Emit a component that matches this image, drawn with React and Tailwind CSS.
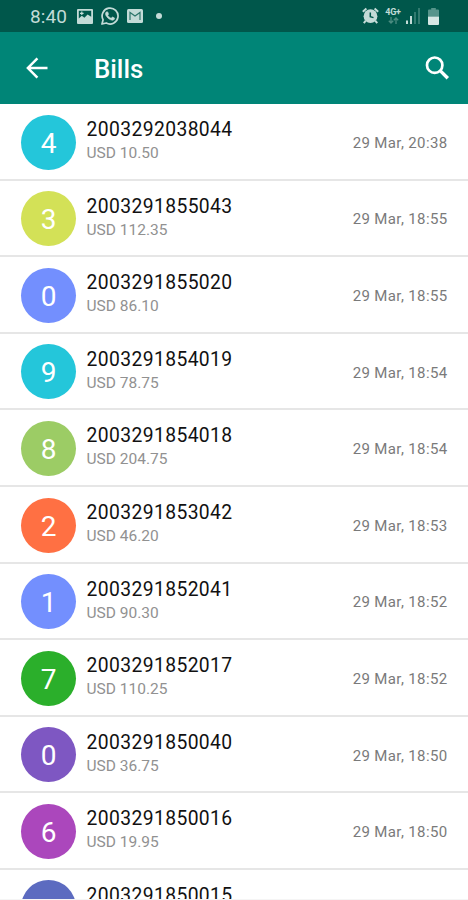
const bills = [
  { id: '2003292038044', amount: '10.50', date: '29 Mar, 20:38', digit: '4', color: 'bg-[#24c6da]' },
  { id: '2003291855043', amount: '112.35', date: '29 Mar, 18:55', digit: '3', color: 'bg-[#d3e157]' },
  { id: '2003291855020', amount: '86.10', date: '29 Mar, 18:55', digit: '0', color: 'bg-[#738ffe]' },
  { id: '2003291854019', amount: '78.75', date: '29 Mar, 18:54', digit: '9', color: 'bg-[#24c6da]' },
  { id: '2003291854018', amount: '204.75', date: '29 Mar, 18:54', digit: '8', color: 'bg-[#9ccc65]' },
  { id: '2003291853042', amount: '46.20', date: '29 Mar, 18:53', digit: '2', color: 'bg-[#ff7043]' },
  { id: '2003291852041', amount: '90.30', date: '29 Mar, 18:52', digit: '1', color: 'bg-[#738ffe]' },
  { id: '2003291852017', amount: '110.25', date: '29 Mar, 18:52', digit: '7', color: 'bg-[#2baf2b]' },
  { id: '2003291850040', amount: '36.75', date: '29 Mar, 18:50', digit: '0', color: 'bg-[#7e57c2]' },
  { id: '2003291850016', amount: '19.95', date: '29 Mar, 18:50', digit: '6', color: 'bg-[#ab47bc]' },
  { id: '2003291850015', amount: '', date: '', digit: '', color: 'bg-[#5c6bc0]' },
];

function StatusBar() {
  return (
    <div className="flex h-8 shrink-0 items-center bg-[#00574b] pl-[30px] pr-[29px] text-[#c3dbd7]">
      <span className="w-[47px] pt-px text-[19px] leading-8 tracking-[0.1px]">8:40</span>
      <svg className="h-[15px] w-4" viewBox="0 0 16 15" fill="currentColor">
        <path fillRule="evenodd" d="M1 0h14a1 1 0 0 1 1 1v13a1 1 0 0 1-1 1H1a1 1 0 0 1-1-1V1a1 1 0 0 1 1-1ZM1.8 1.8v7.6l3-2.6 2.6 2 3.2-3.2 3.6 2.2V1.8Z" />
        <path d="M3 3.7h1.2V2.6h1.2v1.1h1.2v1.2H5.4V6H4.2V4.9H3z" />
      </svg>
      <svg className="ml-2 h-[18px] w-[18px]" viewBox="0 0 24 24" fill="currentColor">
        <path d="M17.5 14.4c-.3-.15-1.76-.87-2.03-.97-.27-.1-.47-.15-.67.15-.2.3-.77.97-.94 1.16-.18.2-.35.23-.65.08-.3-.15-1.25-.46-2.39-1.48-.88-.79-1.48-1.76-1.65-2.06-.17-.3-.02-.46.13-.61.13-.13.3-.35.45-.52.15-.17.2-.3.3-.5.1-.2.05-.37-.03-.52-.07-.15-.66-1.61-.91-2.2-.25-.58-.49-.5-.67-.51h-.57c-.2 0-.52.07-.8.37-.27.3-1.03 1.02-1.03 2.48s1.06 2.88 1.21 3.07c.15.2 2.1 3.2 5.08 4.49.7.3 1.26.49 1.7.63.71.22 1.36.19 1.87.12.57-.09 1.76-.72 2-1.42.25-.7.25-1.29.18-1.41-.08-.13-.28-.2-.58-.35z" stroke="currentColor" strokeWidth=".8" />
        <path fill="none" stroke="currentColor" strokeWidth="2.3" strokeLinejoin="round" d="M1.3 22.7l1.5-5.6A10.6 10.6 0 1 1 7 21.3z" />
      </svg>
      <svg className="ml-2 h-[14px] w-4" viewBox="0 0 16 14">
        <rect width="16" height="14" rx="1.5" fill="currentColor" />
        <path d="M3 11V3.400L8 7l5-3.600V11" fill="none" stroke="#2d766b" strokeWidth="1.2" />
      </svg>
      <span className="ml-[13px] h-[6px] w-[6px] rounded-full bg-current" />

      <svg className="ml-auto h-[18px] w-[17px]" viewBox="0 0 17 18">
        <circle cx="8.5" cy="9.2" r="6.9" fill="currentColor" />
        <path d="M.8 4.8 4.4 1.6M16.2 4.8l-3.6-3.2M3.8 13.6l-2 2.6M13.2 13.6l2 2.6" stroke="currentColor" strokeWidth="2" fill="none" />
        <path d="M8.3 5.4v4.2l3.2 1" fill="none" stroke="#00574b" strokeWidth="1.5" />
      </svg>
      <div className="ml-[6px] flex w-4 flex-col items-center">
        <span className="text-[9px] font-bold leading-[9px] tracking-[-0.3px]">4G+</span>
        <svg className="h-[7px] w-[11px]" viewBox="0 0 11 7" fill="none" stroke="#4c8c81" strokeWidth="1.3">
          <path d="M3 0v6M.8 3.8 3 6l2.2-2.2M8 7V1M5.8 3.2 8 1l2.2 2.2" />
        </svg>
      </div>
      <svg className="ml-[5px] h-4 w-[15px]" viewBox="0 0 15 16" fill="currentColor">
        <path d="M0 12.5h2V16H0zM4 8h2v8H4z" />
        <path d="M8 4h2v12H8zM12 0h2v16h-2z" fill="#327b70" />
      </svg>
      <svg className="ml-[7px] h-[17px] w-[11px]" viewBox="0 0 11 17">
        <path d="M3.2 0h4.6v1.6H10a1 1 0 0 1 1 1v5.900H0V2.600a1 1 0 0 1 1-1h2.200z" fill="#56958b" />
        <path d="M0 8.500h11V16a1 1 0 0 1-1 1H1a1 1 0 0 1-1-1z" fill="#d6e8e4" />
      </svg>
    </div>
  );
}

function Toolbar() {
  return (
    <div className="flex h-[72px] shrink-0 items-center bg-[#008577] pl-[26px] pr-[19.5px] text-white">
      <svg className="h-[22px] w-[22px]" viewBox="0 0 22 22" fill="none" stroke="currentColor" strokeWidth="2.5">
        <path d="M21.5 11H2.2M11.4 1.3 1.9 11l9.5 9.7" />
      </svg>
      <h1 className="ml-[46px] pt-0.5 text-[25.8px] font-medium leading-8">Bills</h1>
      <svg className="ml-auto h-6 w-6" viewBox="0 0 24 24" fill="none" stroke="currentColor">
        <circle cx="9.7" cy="9.2" r="7.7" strokeWidth="2.7" />
        <path d="m14.9 14.4 7.9 7.9" strokeWidth="3.4" />
      </svg>
    </div>
  );
}

function BillRow({ bill }) {
  return (
    <li className="flex h-[76.6px] shrink-0 items-center border-b-2 border-[#e6e6e6] pl-[21px] pr-[20.5px]">
      <div className={`mt-[1.5px] flex h-[55px] w-[55px] items-center justify-center rounded-full pt-[3px] text-[28px] leading-none text-white ${bill.color}`}>
        {bill.digit}
      </div>
      <div className="ml-[10.5px] flex-1 pb-[1.5px]">
        <div className="h-[25px] text-[19.3px] leading-[25px] tracking-[0.4px] text-[#111]">{bill.id}</div>
        <div className="h-[22px] text-[15.5px] leading-[22px] text-[#919191]">
          {bill.amount && `USD ${bill.amount}`}
        </div>
      </div>
      <div className="pt-[3px] text-[15px] leading-5 tracking-[0.37px] text-[#7a7a7a]">{bill.date}</div>
    </li>
  );
}

export default function App() {
  return (
    <div className="flex h-[900px] w-[468px] flex-col overflow-hidden bg-white font-['Roboto',sans-serif]">
      <StatusBar />
      <Toolbar />
      <ul className="flex min-h-0 flex-1 flex-col overflow-hidden">
        {bills.map((bill) => (
          <BillRow key={bill.id} bill={bill} />
        ))}
      </ul>
      <div className="h-px shrink-0 bg-[#f5f5f5]" />
    </div>
  );
}
